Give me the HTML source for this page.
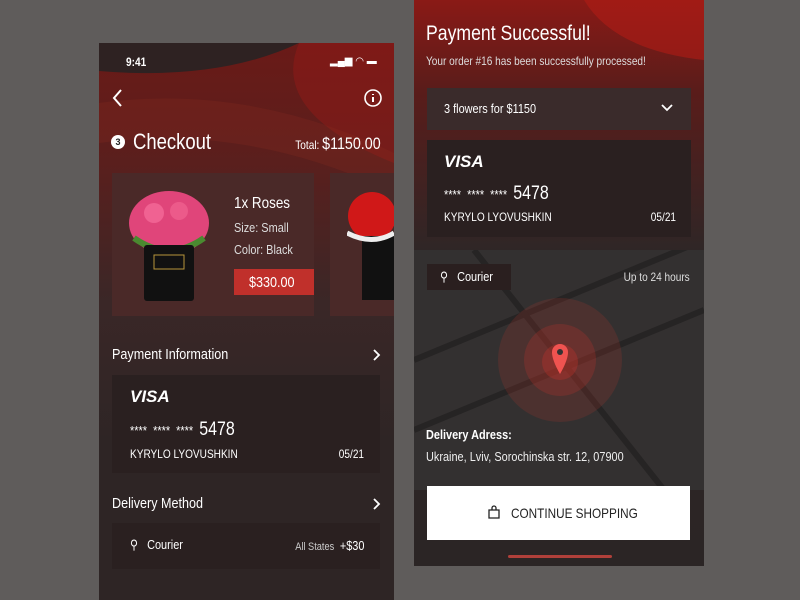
<!DOCTYPE html>
<html><head><meta charset="utf-8"><style>
*{margin:0;padding:0;box-sizing:border-box}
body{width:800px;height:600px;background:#5f5c5b;position:relative;overflow:hidden;font-family:"Liberation Sans",sans-serif;color:#fff}
.ph{position:absolute;overflow:hidden;background:#2e2424}
#p1{left:99px;top:43px;width:295px;height:557px;background:linear-gradient(180deg,#6a1a17 0,#5a1f1d 120px,#3a2727 260px,#2e2525 400px)}
#p2{left:414px;top:0;width:290px;height:566px;background:linear-gradient(180deg,#8a1a16 0,#5a1c1a 90px,#2f2626 250px,#2b2525 560px)}
.a{position:absolute;white-space:nowrap}
.t{transform:scaleX(.84);transform-origin:left center}
.r{transform:scaleX(.84);transform-origin:right center}
.card{position:absolute;background:#2a2020}
</style></head><body>
<div id="p1" class="ph">
 <svg class="a" style="left:0;top:0" width="295" height="200"><path d="M0 28 Q120 38 200 0 L0 0Z" fill="#2e2222"/><path d="M200 0 Q170 70 295 120 L295 0Z" fill="#a51b16" opacity=".35"/><path d="M0 60 Q150 40 295 110 L295 150 Q150 80 0 100Z" fill="#8a2a1e" opacity=".25"/></svg>
 <div class="a t" style="left:27px;top:12px;font-size:12px;font-weight:bold">9:41</div>
 <div class="a" style="left:231px;top:13px;font-size:10px">▂▄▆ ◠ ▬</div>
 <svg class="a" style="left:12px;top:45px" width="14" height="20"><path d="M10 2 L3 10 L10 18" stroke="#fff" stroke-width="2" fill="none"/></svg>
 <svg class="a" style="left:264px;top:45px" width="20" height="20"><circle cx="10" cy="10" r="8" stroke="#fff" stroke-width="1.6" fill="none"/><path d="M10 9v5M10 6v1" stroke="#fff" stroke-width="2"/></svg>
 <div class="a" style="left:12px;top:92px;width:14px;height:14px;border-radius:50%;background:#fff;color:#222;font-size:9px;text-align:center;line-height:14px;font-weight:bold">3</div>
 <div class="a t" style="left:34px;top:86px;font-size:22px">Checkout</div>
 <div class="a r" style="right:13px;top:91px;font-size:12px">Total: <span style="font-size:17px">$1150.00</span></div>
 <div class="card" style="left:13px;top:130px;width:202px;height:143px;background:#4a2928"></div>
 <div class="card" style="left:231px;top:130px;width:70px;height:143px;background:#4a2928"></div>
 <svg class="a" style="left:25px;top:140px" width="90" height="125"><ellipse cx="45" cy="40" rx="40" ry="32" fill="#e0457a"/><circle cx="30" cy="30" r="10" fill="#f06292"/><circle cx="55" cy="28" r="9" fill="#ec5a8a"/><path d="M10 55 Q45 80 80 55" stroke="#4a8a30" stroke-width="6" fill="none"/><rect x="20" y="62" width="50" height="56" rx="3" fill="#111"/><rect x="30" y="72" width="30" height="14" stroke="#b8953a" fill="none"/></svg>
 <svg class="a" style="left:248px;top:148px" width="47" height="115"><circle cx="25" cy="25" r="24" fill="#d01818"/><rect x="15" y="45" width="32" height="64" fill="#111"/><path d="M0 42 Q25 55 47 42" stroke="#eee" stroke-width="5" fill="none"/></svg>
 <div class="a t" style="left:135px;top:152px;font-size:16px">1x Roses</div>
 <div class="a t" style="left:135px;top:177px;font-size:13px;color:#ddd">Size: Small</div>
 <div class="a t" style="left:135px;top:199px;font-size:13px;color:#ddd">Color: Black</div>
 <div class="a" style="left:135px;top:226px;width:80px;height:26px;background:#c0302b"></div>
 <div class="a t" style="left:150px;top:231px;font-size:15px">$330.00</div>
 <div class="a t" style="left:13px;top:303px;font-size:15px">Payment Information</div>
 <svg class="a" style="left:273px;top:305px" width="10" height="14"><path d="M2 2l5 5-5 5" stroke="#fff" stroke-width="1.8" fill="none"/></svg>
 <div class="card" style="left:13px;top:332px;width:268px;height:98px"></div>
 <div class="a" style="left:31px;top:344px;font-size:17px;font-weight:bold;font-style:italic">VISA</div>
 <div class="a t" style="left:31px;top:376px;font-size:13px">****&nbsp; ****&nbsp; ****&nbsp; <span style="font-size:19px">5478</span></div>
 <div class="a t" style="left:31px;top:404px;font-size:12px">KYRYLO LYOVUSHKIN</div>
 <div class="a r" style="right:30px;top:404px;font-size:12px">05/21</div>
 <div class="a t" style="left:13px;top:452px;font-size:15px">Delivery Method</div>
 <svg class="a" style="left:273px;top:454px" width="10" height="14"><path d="M2 2l5 5-5 5" stroke="#fff" stroke-width="1.8" fill="none"/></svg>
 <div class="card" style="left:13px;top:480px;width:268px;height:46px"></div>
 <div class="a t" style="left:31px;top:494px;font-size:13px">⚲&nbsp;&nbsp; Courier</div>
 <div class="a r" style="right:30px;top:495px;font-size:11px;color:#ccc">All States <span style="font-size:13px;color:#fff">&nbsp;+$30</span></div>
</div>
<div id="p2" class="ph">
 <svg class="a" style="left:0;top:0" width="290" height="80"><path d="M170 0 Q200 50 290 60 L290 0Z" fill="#b01c15" opacity=".6"/></svg>
 <div class="a t" style="left:12px;top:22px;font-size:21px">Payment Successful!</div>
 <div class="a t" style="left:12px;top:54px;font-size:12px;color:#ddd">Your order #16 has been successfully processed!</div>
 <div class="card" style="left:13px;top:88px;width:264px;height:42px;background:#3a2b2b"></div>
 <div class="a t" style="left:30px;top:101px;font-size:13px">3 flowers for $1150</div>
 <svg class="a" style="left:246px;top:103px" width="14" height="10"><path d="M2 2l5 5 5-5" stroke="#fff" stroke-width="1.8" fill="none"/></svg>
 <div class="card" style="left:13px;top:140px;width:264px;height:97px"></div>
 <div class="a" style="left:30px;top:152px;font-size:17px;font-weight:bold;font-style:italic">VISA</div>
 <div class="a t" style="left:30px;top:183px;font-size:13px">****&nbsp; ****&nbsp; ****&nbsp; <span style="font-size:19px">5478</span></div>
 <div class="a t" style="left:30px;top:210px;font-size:12px">KYRYLO LYOVUSHKIN</div>
 <div class="a r" style="right:28px;top:210px;font-size:12px">05/21</div>
 <div class="a" style="left:0;top:250px;width:290px;height:240px;background:#333030"></div>
 <svg class="a" style="left:0;top:250px" width="290" height="240"><g stroke="#262424" stroke-width="6"><path d="M0 110 L290 -10"/><path d="M60 0 L250 240"/><path d="M0 180 L290 60"/></g><circle cx="146" cy="110" r="62" fill="#c0352a" opacity=".18"/><circle cx="146" cy="110" r="36" fill="#c0352a" opacity=".25"/><circle cx="146" cy="112" r="18" fill="#c0352a" opacity=".35"/><path d="M146 124 C138 110 138 104 138 102 a8 8 0 0 1 16 0 c0 2 0 8 -8 22z" fill="#ef5350"/><circle cx="146" cy="102" r="3" fill="#333"/></svg>
 <div class="card" style="left:13px;top:264px;width:84px;height:26px;background:#2a1f1f"></div>
 <div class="a t" style="left:26px;top:269px;font-size:13px">⚲&nbsp;&nbsp; Courier</div>
 <div class="a r" style="right:14px;top:270px;font-size:12px;color:#ddd">Up to 24 hours</div>
 <div class="a t" style="left:12px;top:427px;font-size:13px;font-weight:bold">Delivery Adress:</div>
 <div class="a t" style="left:12px;top:449px;font-size:13px;color:#eee">Ukraine, Lviv, Sorochinska str. 12, 07900</div>
 <div class="a" style="left:13px;top:486px;width:263px;height:54px;background:#fff"></div>
 <svg class="a" style="left:74px;top:505px" width="12" height="14"><path d="M1 5h10v8H1z M4 5V3a2 2 0 0 1 4 0v2" stroke="#222" stroke-width="1.3" fill="none"/></svg>
 <div class="a t" style="left:97px;top:505px;font-size:14px;color:#222">CONTINUE SHOPPING</div>
 <div class="a" style="left:94px;top:555px;width:104px;height:3px;border-radius:2px;background:#b0403a"></div>
</div>
</body></html>
